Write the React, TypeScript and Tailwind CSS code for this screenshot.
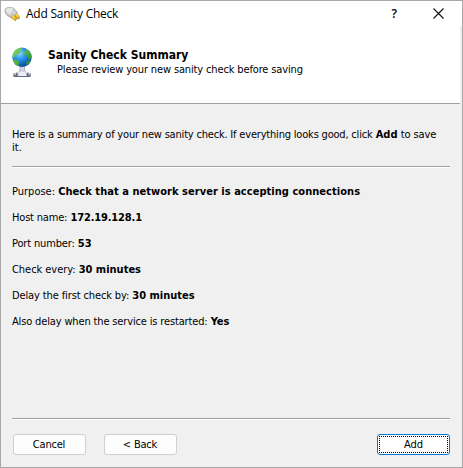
import type { ReactNode } from 'react';

const BODY_FONT = "font-['DejaVu_Sans_Condensed','DejaVu_Sans',sans-serif] [font-stretch:condensed]";

function PlugIcon() {
  return (
    <svg width="16" height="16" viewBox="0 0 16 16" className="shrink-0">
      <path d="M1.500 2.500C4 .8 7.500.8 10 2.600L13.200 6C13.500 9.500 11 12 7.500 12L3 9.500C.8 7.500.3 4.500 1.500 2.500z" fill="#c0c0c0" stroke="#a0a0a0" strokeWidth=".6" />
      <path d="M2 3C4.500 1.300 7.500 1.400 9.500 3L6 8.500C3.500 8 1.200 5.500 2 3z" fill="#e6e6e6" />
      <path d="M9.600 4l2.500 2.600C11.500 9 9.500 10.500 7 10.500L5.500 9z" fill="#d2d2d2" />
      <path d="M8.500 10.200l2.500 2.800M12.500 9.200l1.700 2.300" stroke="#a57c0c" strokeWidth="3.200" strokeLinecap="round" />
      <path d="M8.300 9.900l2.500 2.800M12.300 8.900l1.700 2.300" stroke="#f5cf2c" strokeWidth="2.200" strokeLinecap="round" />
      <path d="M8.400 9.200l1.600 1.700M12.400 8.200l1.100 1.500" stroke="#fff2a0" strokeWidth=".9" />
    </svg>
  );
}

function GlobeIcon() {
  return (
    <svg width="20" height="31" viewBox="0 0 20 31" className="shrink-0">
      <defs>
        <radialGradient id="sea" cx="38%" cy="30%" r="70%">
          <stop offset="0" stopColor="#8fd6ff" />
          <stop offset=".45" stopColor="#2693ea" />
          <stop offset="1" stopColor="#0749a6" />
        </radialGradient>
        <linearGradient id="land" x2="1" y2="1">
          <stop offset="0" stopColor="#8ce05f" />
          <stop offset="1" stopColor="#168424" />
        </linearGradient>
        <linearGradient id="pipe" x2="0" y2="1">
          <stop offset="0" stopColor="#e4e4ee" />
          <stop offset="1" stopColor="#66677a" />
        </linearGradient>
      </defs>
      <path d="M8 19h4.500v6H8z" fill="#d4d5e5" stroke="#9a9bb0" strokeWidth=".7" />
      <rect x="1" y="25.600" width="18" height="3.800" fill="url(#pipe)" />
      <path d="M7 24h6.500l1.500 5.500H5.500z" fill="#ededf8" stroke="#a4a5bc" strokeWidth=".6" />
      <path d="M4.700 25.600v3.800M15.800 25.600v3.800" stroke="#55566a" />
      <path d="M2 29.500h16" stroke="#666779" />
      <circle cx="10" cy="10.300" r="9.700" fill="url(#sea)" />
      <path d="M1 6.500C2.500 3 5.500 1 9 .7l1 1.500-2 1.500.5 1.700L6 7.500l-2.500.3-.8 2.400-2 .3zM13 1.200c3.500 1.500 6 4.500 6.500 8l-1.500 3.500-2-1.200-.5-3-3-.8-.5-2.500 2-1.500zM1 12.500l4 .5 2.500 2-1 4.200C3.500 18 1.500 15.500 1 12.500zM16 13.500l2.500.3c-.8 1.800-2 3.500-3.700 4.700l-1-2z" fill="url(#land)" />
    </svg>
  );
}

function Rule() {
  return <div className="h-[2px] w-[438px] border-t border-[#a0a0a0] bg-white" />;
}

function DialogButton({ children, focused = false }: { children: ReactNode; focused?: boolean }) {
  return (
    <button
      className={
        focused
          ? 'h-[21px] w-[73px] rounded-[3px] border border-[#0078d4] bg-white p-px'
          : 'h-[21px] w-[73px] rounded-[3px] border border-[#d0d0d0] bg-[#fdfdfd] p-px'
      }
    >
      <span
        className={
          focused
            ? 'flex h-full w-full items-center justify-center border border-dotted border-black'
            : 'flex h-full w-full items-center justify-center pr-px tracking-[-0.2px]'
        }
      >
        {children}
      </span>
    </button>
  );
}

function Row({ label, value }: { label: ReactNode; value: ReactNode }) {
  return (
    <div className="h-[13px] whitespace-nowrap">
      {label} {value}
    </div>
  );
}

export default function App() {
  return (
    <div className={`flex h-[468px] w-[463px] flex-col border border-[#a8a8a8] bg-[#f0f0f0] text-[11px] leading-[13px] text-black ${BODY_FONT}`}>
      <div className="flex h-[25px] shrink-0 items-center bg-white pl-[3px]">
        <PlugIcon />
        <span className="ml-[6px] whitespace-nowrap font-['Open_Sans','Noto_Sans',sans-serif] text-[12px] tracking-[-0.25px] [font-stretch:normal]">Add Sanity Check</span>
        <span className="ml-auto mr-[36px] font-['Open_Sans',sans-serif] text-[12px] font-semibold [font-stretch:normal]">?</span>
        <svg width="11" height="11" viewBox="0 0 11 11" className="mr-[18px]">
          <path d="M.5.5l10 10M10.500.5l-10 10" stroke="#111" strokeWidth="1.100" />
        </svg>
      </div>
      <div className="flex h-[78px] w-[459px] shrink-0 border-b border-[#a0a0a0] bg-white pl-[11px] pt-[21px]">
        <GlobeIcon />
        <div className="ml-[16px]">
          <div className="h-[16px] whitespace-nowrap text-[12px] font-bold leading-[16px]">Sanity Check Summary</div>
          <div className="ml-[9px] whitespace-nowrap tracking-[-0.14px]">Please review your new sanity check before saving</div>
        </div>
      </div>
      <div className="flex grow flex-col pl-[11px] pt-[24px]">
        <div className="h-[26px]">
          <div className="whitespace-nowrap">
            <span className="tracking-[-0.19px]">Here is a summary of your new sanity check. If everything looks good, click</span> <b>Add</b> <span className="tracking-[-0.1px]">to save</span>
          </div>
          <div>it.</div>
        </div>
        <div className="mb-[17px] mt-[12px]"><Rule /></div>
        <div className="flex flex-col gap-[13px]">
          <Row label="Purpose:" value={<b className="tracking-[0.04px]">Check that a network server is accepting connections</b>} />
          <Row label={<span className="tracking-[-0.18px]">Host name:</span>} value={<b className="tracking-[-0.15px]">172.19.128.1</b>} />
          <Row label={<span className="tracking-[-0.15px]">Port number:</span>} value={<b>53</b>} />
          <Row label={<span className="tracking-[-0.05px]">Check every:</span>} value={<b>30 minutes</b>} />
          <Row label={<span className="tracking-[-0.12px]">Delay the first check by:</span>} value={<b>30 minutes</b>} />
          <Row label={<span className="tracking-[-0.15px]">Also delay when the service is restarted:</span>} value={<b>Yes</b>} />
        </div>
        <div className="mb-[14px] mt-auto"><Rule /></div>
        <div className="mb-[12px] ml-px flex w-[437px]">
          <DialogButton>Cancel</DialogButton>
          <div className="ml-[18px]"><DialogButton>&lt; Back</DialogButton></div>
          <div className="ml-auto"><DialogButton focused>Add</DialogButton></div>
        </div>
      </div>
    </div>
  );
}
